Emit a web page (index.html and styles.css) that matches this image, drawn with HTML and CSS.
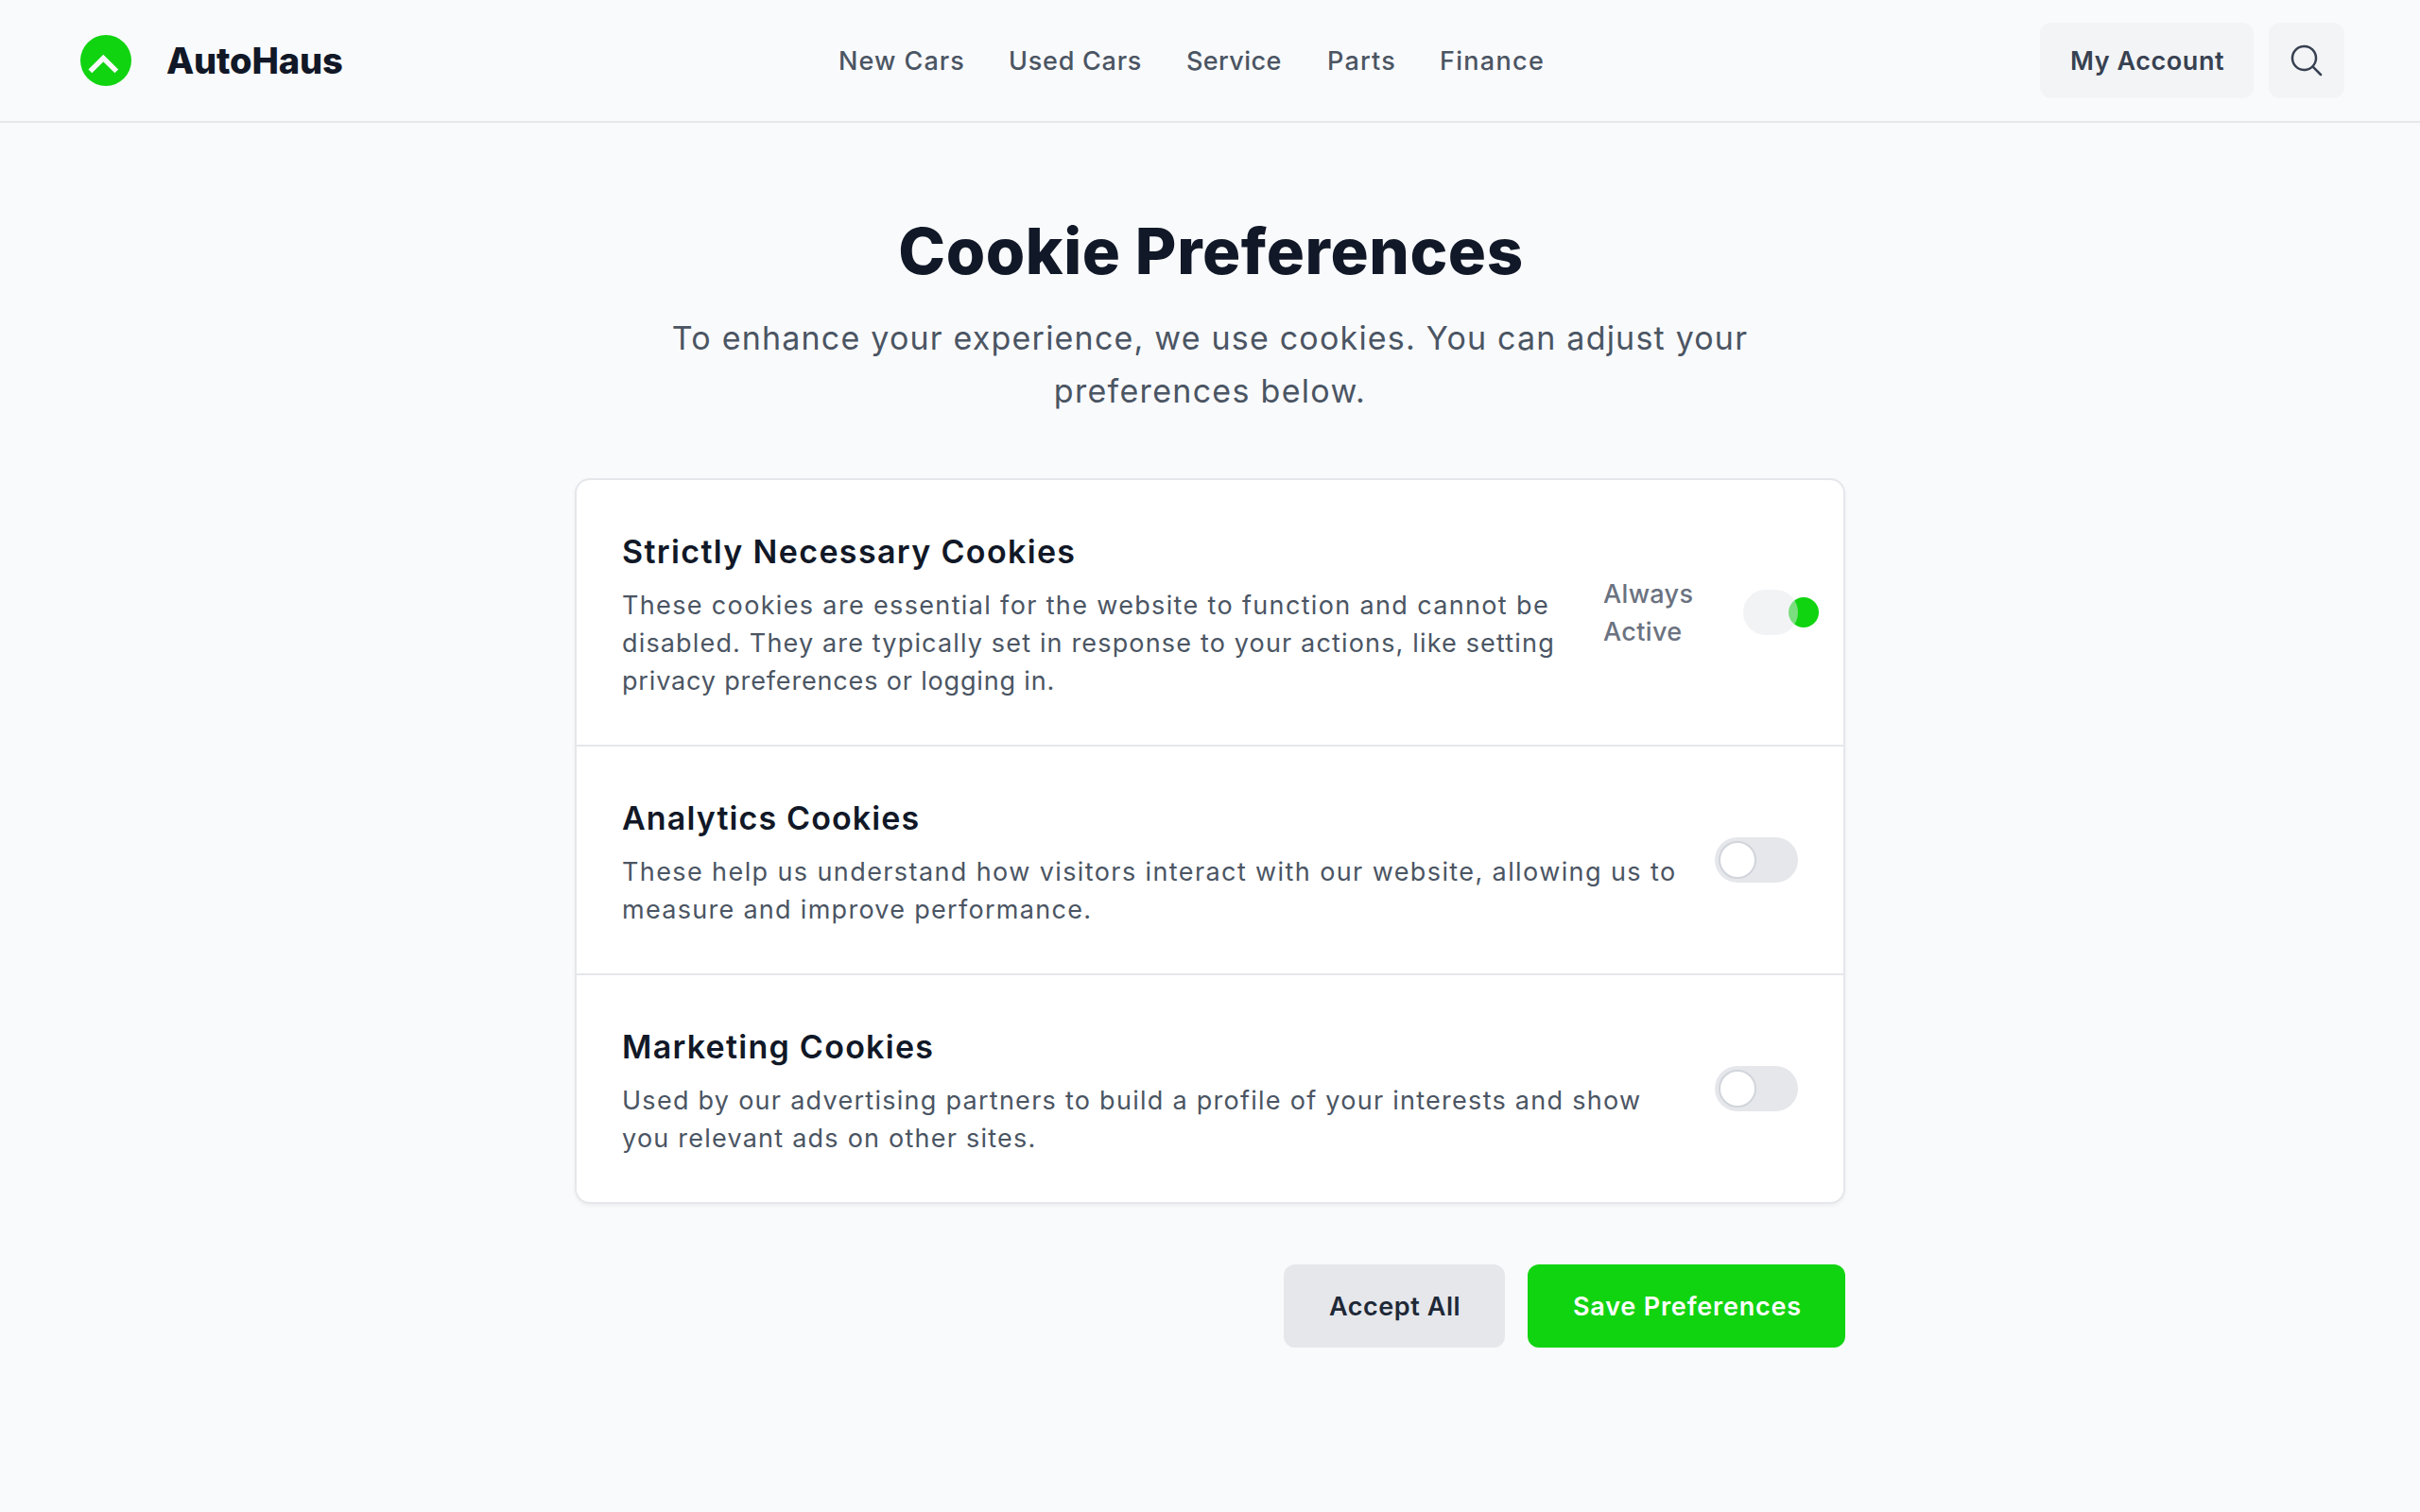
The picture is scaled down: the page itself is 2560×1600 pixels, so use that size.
FILE: index.html
```
<!DOCTYPE html>
<html lang="en">
<head>
<meta charset="utf-8">
<title>AutoHaus – Cookie Preferences</title>
<link rel="stylesheet" href="styles.css">
</head>
<body>
<header class="header">
  <div class="brand">
    <svg class="brand-logo" viewBox="0 0 64 64" aria-hidden="true">
      <circle cx="32" cy="32" r="27" fill="#11d411"/>
      <path d="M15.4 43.4 29.3 29.5 43.3 43.4" fill="none" stroke="#f9fafb" stroke-width="5.4"/>
    </svg>
    <span class="brand-name">AutoHaus</span>
  </div>
  <nav class="nav">
    <a class="nav-new">New Cars</a>
    <a class="nav-used">Used Cars</a>
    <a class="nav-service">Service</a>
    <a class="nav-parts">Parts</a>
    <a class="nav-finance">Finance</a>
  </nav>
  <div class="actions">
    <button class="account">My Account</button>
    <button class="search" aria-label="Search">
      <svg class="search-icon" viewBox="0 0 256 256" fill="currentColor"><path d="M229.66,218.34l-50.07-50.06a88.11,88.11,0,1,0-11.31,11.31l50.06,50.07a8,8,0,0,0,11.32-11.32ZM40,112a72,72,0,1,1,72,72A72.08,72.08,0,0,1,40,112Z"/></svg>
    </button>
  </div>
</header>
<main class="main">
  <h1 class="title">Cookie Preferences</h1>
  <p class="subtitle"><span class="line sub-1">To enhance your experience, we use cookies. You can adjust your</span> <span class="line sub-2">preferences below.</span></p>
  <section class="card">
    <div class="row">
      <div class="info">
        <h2 class="name name-1">Strictly Necessary Cookies</h2>
        <p class="desc"><span class="line d1-1">These cookies are essential for the website to function and cannot be</span> <span class="line d1-2">disabled. They are typically set in response to your actions, like setting</span> <span class="line d1-3">privacy preferences or logging in.</span></p>
      </div>
      <div class="always">
        <span class="always-label">Always<br>Active</span>
        <span class="locked"><span class="locked-dot"></span><span class="locked-track"></span></span>
      </div>
    </div>
    <div class="row">
      <div class="info">
        <h2 class="name name-2">Analytics Cookies</h2>
        <p class="desc"><span class="line d2-1">These help us understand how visitors interact with our website, allowing us to</span> <span class="line d2-2">measure and improve performance.</span></p>
      </div>
      <span class="toggle"><span class="knob"></span></span>
    </div>
    <div class="row">
      <div class="info">
        <h2 class="name name-3">Marketing Cookies</h2>
        <p class="desc"><span class="line d3-1">Used by our advertising partners to build a profile of your interests and show</span> <span class="line d3-2">you relevant ads on other sites.</span></p>
      </div>
      <span class="toggle"><span class="knob"></span></span>
    </div>
  </section>
  <div class="buttons">
    <button class="accept">Accept All</button>
    <button class="save">Save Preferences</button>
  </div>
</main>
</body>
</html>
```
FILE: styles.css
```
* { box-sizing: border-box; margin: 0; padding: 0; }
body {
  min-height: 1600px;
  background: #f9fafc;
  color: #111827;
  font-family: Inter, "Liberation Sans", sans-serif;
  font-size: 27px;
  line-height: 40px;
}
button { border: 0; font: inherit; font-weight: 600; border-radius: 12px; white-space: nowrap; }
.line { display: block; white-space: nowrap; }

.header {
  display: flex;
  align-items: center;
  justify-content: space-between;
  height: 130px;
  padding: 0 80px;
  border-bottom: 2px solid #e5e7eb;
}
.brand { display: flex; align-items: center; gap: 32px; width: 281px; }
.brand-logo { flex: none; width: 64px; height: 64px; }
.brand-name { font-size: 38px; font-weight: 800; letter-spacing: -0.15px; }

.nav {
  display: grid;
  grid-template-columns: 180px 188px 149px 119px 109px;
  padding-top: 2px;
  color: #4b5563;
  font-weight: 500;
  white-space: nowrap;
}
.nav-new { letter-spacing: 1.05px; }
.nav-used { letter-spacing: 0.75px; }
.nav-service { letter-spacing: 0.4px; }
.nav-parts { letter-spacing: 1.2px; }
.nav-finance { letter-spacing: 1.3px; }

.actions { display: flex; gap: 16px; }
.account {
  width: 226px;
  height: 80px;
  padding: 2px 0 0 32px;
  background: #f3f4f6;
  color: #374151;
  letter-spacing: 0.55px;
  text-align: left;
}
.search {
  display: grid;
  place-items: center;
  width: 80px;
  height: 80px;
  background: #f3f4f6;
  color: #374151;
}
.search-icon { width: 40px; height: 40px; }

.main { width: 1344px; margin: 0 auto; padding-top: 96px; }
.title {
  padding-left: 2px;
  font-size: 67px;
  font-weight: 800;
  line-height: 80px;
  letter-spacing: 0.6px;
  text-align: center;
}
.subtitle {
  margin: 24px 0 64px;
  color: #4b5563;
  font-size: 34px;
  line-height: 56px;
  text-align: center;
}
.sub-1 { letter-spacing: 1.2px; }
.sub-2 { letter-spacing: 1.3px; }

.card {
  background: #fff;
  border: 2px solid #e5e7eb;
  border-radius: 16px;
  box-shadow: 0 2px 4px rgba(0, 0, 0, 0.05);
}
.row {
  display: flex;
  align-items: center;
  justify-content: space-between;
  padding: 48px;
}
.row + .row { border-top: 2px solid #e5e7eb; }
.name { margin-bottom: 8px; font-size: 34px; font-weight: 600; line-height: 56px; }
.name-1 { letter-spacing: 1.35px; }
.name-2 { letter-spacing: 1.12px; }
.name-3 { letter-spacing: 1.27px; }
.desc { margin-bottom: -1px; padding-top: 1px; color: #4b5563; }
.d1-1 { letter-spacing: 1.35px; }
.d1-2 { letter-spacing: 1.16px; }
.d1-3 { letter-spacing: 0.84px; }
.d2-1 { letter-spacing: 1.4px; }
.d2-2 { letter-spacing: 1.29px; }
.d3-1 { letter-spacing: 1.27px; }
.d3-2 { letter-spacing: 1.23px; }

.always { display: flex; align-items: center; justify-content: space-between; width: 206px; }
.always-label { padding-top: 2px; color: #6b7280; font-weight: 500; letter-spacing: 0.35px; }
.locked { position: relative; width: 58px; height: 48px; }
.locked-dot {
  position: absolute;
  top: 8px;
  left: 48px;
  width: 32px;
  height: 32px;
  border-radius: 50%;
  background: #11d411;
}
.locked-track {
  position: absolute;
  inset: 0;
  border-radius: 24px;
  background: #e5e7eb;
  opacity: 0.5;
}
.toggle { width: 88px; height: 48px; padding: 4px; border-radius: 24px; background: #e5e7eb; }
.knob {
  display: block;
  width: 40px;
  height: 40px;
  border: 2px solid #d1d5db;
  border-radius: 50%;
  background: #fff;
}

.buttons { display: flex; justify-content: flex-end; gap: 24px; margin-top: 64px; }
.accept, .save { height: 88px; padding: 2px 0 0 48px; text-align: left; }
.accept { width: 234px; background: #e5e7eb; color: #1f2937; letter-spacing: 0.55px; }
.save { width: 336px; background: #11d411; color: #fff; letter-spacing: 0.8px; }
```
